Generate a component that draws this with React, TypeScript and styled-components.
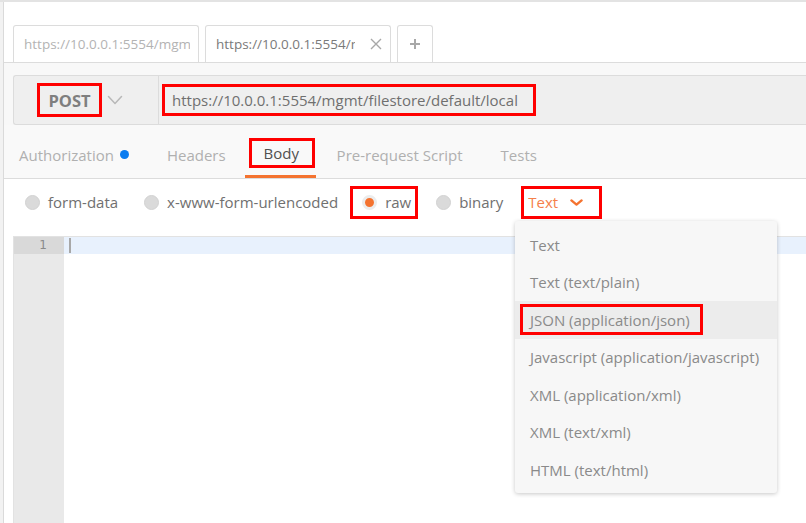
import styled, { createGlobalStyle } from 'styled-components';

const RED = '#ff0000';
const ORANGE = '#f47330';

const GlobalStyle = createGlobalStyle`
  html, body { margin: 0; padding: 0; background: #fff; }
  body { font-family: "Open Sans", "Liberation Sans", Arial, sans-serif; }
  * { box-sizing: border-box; }
`;

const Root = styled.div`
  position: relative;
  width: 806px;
  height: 523px;
  overflow: hidden;
  background: #f2f2f2;
  border-top: 2px solid #e3e3e3;
  display: flex;
`;

const Frame = styled.div`
  margin-left: 3px;
  flex: 1;
  min-width: 0;
  border-left: 1px solid #dadada;
  background: #fff;
  display: flex;
  flex-direction: column;
`;

const Highlight = styled.span<{ $w?: number; $h: number; $pad: string; $center?: boolean }>`
  display: inline-flex;
  align-items: center;
  justify-content: ${({ $center }) => ($center ? 'center' : 'flex-start')};
  height: ${({ $h }) => $h}px;
  ${({ $w }) => ($w ? `width: ${$w}px;` : '')}
  padding: ${({ $pad }) => $pad};
  border: 3px solid ${RED};
  flex-shrink: 0;
`;

/* ---- tab strip ---- */
const TabStrip = styled.div`
  height: 61px;
  display: flex;
  align-items: flex-end;
  gap: 6px;
  padding-left: 9px;
  border-bottom: 1px solid #dcdcdc;
`;

const Tab = styled.div<{ $active?: boolean; $w: number }>`
  width: ${({ $w }) => $w}px;
  height: 37px;
  display: flex;
  align-items: center;
  padding: 0 8px 0 10px;
  border: 1px solid #dcdcdc;
  border-bottom: none;
  border-radius: 3px 3px 0 0;
  background: #fff;
  font-size: 13.5px;
  color: ${({ $active }) => ($active ? '#7a7a7a' : '#b3b3b3')};
`;

const TabTitle = styled.span<{ $w?: number }>`
  ${({ $w }) => ($w ? `width: ${$w}px;` : 'flex: 1;')}
  min-width: 0;
  overflow: hidden;
  white-space: nowrap;
`;

const CloseIcon = styled.span`
  margin-left: auto;
  display: flex;
`;

const PlusTab = styled(Tab)`
  justify-content: center;
  padding: 0;
`;

/* ---- request bar ---- */
const RequestArea = styled.div`
  background: #f8f8f8;
  padding-top: 12px;
`;

const RequestBar = styled.div`
  margin-left: 9px;
  height: 50px;
  display: flex;
  background: #efefef;
  border: 1px solid #dcdcdc;
  border-right: none;
  border-radius: 3px 0 0 3px;
`;

const MethodCell = styled.div`
  width: 145px;
  display: flex;
  align-items: center;
  gap: 5px;
  padding-left: 23px;
  border-right: 1px solid #dcdcdc;
`;

const MethodText = styled.span`
  font-size: 16.5px;
  font-weight: 700;
  color: #7f7f7f;
  padding-top: 1px;
`;

const UrlCell = styled.div`
  flex: 1;
  display: flex;
  align-items: center;
  padding-left: 3px;
`;

const UrlText = styled.span`
  font-size: 15px;
  color: #6f6f6f;
  white-space: nowrap;
`;

/* ---- sub tabs ---- */
const Nav = styled.div`
  height: 54px;
  display: flex;
  background: #f9f9f9;
  border-bottom: 1px solid #dcdcdc;
`;

const NavItem = styled.div<{ $active?: boolean; $pad?: string }>`
  display: flex;
  align-items: center;
  gap: 6px;
  padding: ${({ $pad }) => $pad ?? '6px 19px 0'};
  font-size: 15px;
  color: ${({ $active }) => ($active ? '#505050' : '#b0b0b0')};
  box-shadow: ${({ $active }) => ($active ? `inset 0 -3px 0 ${ORANGE}` : 'none')};
  white-space: nowrap;
`;

const Dot = styled.span`
  width: 9px;
  height: 9px;
  border-radius: 50%;
  background: #0a7cf0;
`;

/* ---- body type row ---- */
const RadioRow = styled.div`
  height: 46px;
  display: flex;
  align-items: center;
  padding-left: 21px;
`;

const Option = styled.label<{ $after: number }>`
  display: flex;
  align-items: center;
  gap: 8px;
  margin-right: ${({ $after }) => $after}px;
  font-size: 15px;
  color: #707070;
  white-space: nowrap;
`;

const Radio = styled.span<{ $checked?: boolean }>`
  width: 15px;
  height: 15px;
  border-radius: 50%;
  background: ${({ $checked }) => ($checked ? ORANGE : '#dadada')};
  border: ${({ $checked }) => ($checked ? '3px solid #ececec' : '1px solid #d2d2d2')};
  flex-shrink: 0;
`;

const TypeText = styled.span`
  font-size: 15px;
  color: #f5804a;
  margin-right: 11px;
`;

/* ---- editor ---- */
const Editor = styled.div`
  flex: 1;
  margin-top: 11px;
  margin-left: 9px;
  display: flex;
  border-top: 1px solid #e2e2e2;
  border-left: 1px solid #e2e2e2;
`;

const Gutter = styled.div`
  width: 50px;
  background: #e9e9e9;
`;

const LineNo = styled.div`
  height: 17px;
  background: #d9d9d9;
  text-align: right;
  padding-right: 17px;
  font-family: "DejaVu Sans", sans-serif;
  font-size: 12px;
  line-height: 17px;
  color: #8a8a8a;
`;

const Code = styled.div`
  flex: 1;
`;

const ActiveLine = styled.div`
  height: 17px;
  background: #e8f1fd;
  padding-left: 5px;
  display: flex;
  align-items: center;
`;

const Cursor = styled.span`
  width: 2px;
  height: 15px;
  background: #a8a8a8;
`;

/* ---- dropdown ---- */
const Menu = styled.div`
  position: absolute;
  left: 515px;
  top: 219px;
  width: 262px;
  padding: 5px 0 4px;
  background: #f7f7f7;
  border-radius: 3px;
  box-shadow: 0 1px 4px rgba(0, 0, 0, 0.22);
`;

const MenuItem = styled.div<{ $selected?: boolean }>`
  height: 37.5px;
  display: flex;
  align-items: center;
  padding-left: ${({ $selected }) => ($selected ? '5px' : '15px')};
  background: ${({ $selected }) => ($selected ? '#ececec' : 'transparent')};
  font-size: 15px;
  color: #8a8a8a;
  white-space: nowrap;
`;

const Chevron = ({ color, w, h, sw }: { color: string; w: number; h: number; sw: number }) => (
  <svg width={w} height={h} viewBox={`0 0 ${w} ${h}`} fill="none">
    <path d={`M${sw} ${sw} L${w / 2} ${h - sw} L${w - sw} ${sw}`} stroke={color} strokeWidth={sw} strokeLinecap="round" strokeLinejoin="round" />
  </svg>
);

const options = [
  { label: 'form-data', after: 26 },
  { label: 'x-www-form-urlencoded', after: 12 },
];

const menuItems = [
  'Text',
  'Text (text/plain)',
  'JSON (application/json)',
  'Javascript (application/javascript)',
  'XML (application/xml)',
  'XML (text/xml)',
  'HTML (text/html)',
];

export default function App() {
  return (
    <>
      <GlobalStyle />
      <Root>
        <Frame>
          <TabStrip>
            <Tab $w={186}>
              <TabTitle>https://10.0.0.1:5554/mgmt/filestore/default/local</TabTitle>
            </Tab>
            <Tab $w={186} $active>
              <TabTitle $w={139}>https://10.0.0.1:5554/mgmt/filestore</TabTitle>
              <CloseIcon>
                <svg width="12" height="12" viewBox="0 0 12 12">
                  <path d="M1 1 L11 11 M11 1 L1 11" stroke="#a8a8a8" strokeWidth="1.4" />
                </svg>
              </CloseIcon>
            </Tab>
            <PlusTab $w={36}>
              <svg width="12" height="12" viewBox="0 0 12 12">
                <path d="M6 1 V11 M1 6 H11" stroke="#a8a8a8" strokeWidth="2" />
              </svg>
            </PlusTab>
          </TabStrip>

          <RequestArea>
            <RequestBar>
              <MethodCell>
                <Highlight $h={34} $w={65} $pad="0" $center>
                  <MethodText>POST</MethodText>
                </Highlight>
                <Chevron color="#b8b8b8" w={16} h={10} sw={1.5} />
              </MethodCell>
              <UrlCell>
                <Highlight $h={32} $w={374} $pad="0 0 0 7px">
                  <UrlText>https://10.0.0.1:5554/mgmt/filestore/default/local</UrlText>
                </Highlight>
              </UrlCell>
            </RequestBar>
            <Nav>
              <NavItem $pad="6px 19px 0 15px">
                Authorization <Dot />
              </NavItem>
              <NavItem>Headers</NavItem>
              <NavItem $active $pad="2px 1px 0 4px">
                <Highlight $h={30} $w={66} $pad="0 0 0 12px">Body</Highlight>
              </NavItem>
              <NavItem $pad="6px 19px 0 21px">Pre-request Script</NavItem>
              <NavItem>Tests</NavItem>
            </Nav>
          </RequestArea>

          <RadioRow>
            {options.map((o) => (
              <Option key={o.label} $after={o.after}>
                <Radio />
                {o.label}
              </Option>
            ))}
            <Highlight $h={33} $w={68} $pad="0 0 0 9px" style={{ marginRight: 18 }}>
              <Option $after={0}>
                <Radio $checked />
                raw
              </Option>
            </Highlight>
            <Option $after={18}>
              <Radio />
              binary
            </Option>
            <Highlight $h={33} $w={81} $pad="0 0 0 4px">
              <TypeText>Text</TypeText>
              <Chevron color={ORANGE} w={15} h={9} sw={2.4} />
            </Highlight>
          </RadioRow>

          <Editor>
            <Gutter>
              <LineNo>1</LineNo>
            </Gutter>
            <Code>
              <ActiveLine>
                <Cursor />
              </ActiveLine>
            </Code>
          </Editor>
        </Frame>

        <Menu>
          {menuItems.map((m) =>
            m.startsWith('JSON') ? (
              <MenuItem key={m} $selected>
                <Highlight $h={31} $w={183} $pad="0 0 0 7px">
                  {m}
                </Highlight>
              </MenuItem>
            ) : (
              <MenuItem key={m}>{m}</MenuItem>
            ),
          )}
        </Menu>
      </Root>
    </>
  );
}
